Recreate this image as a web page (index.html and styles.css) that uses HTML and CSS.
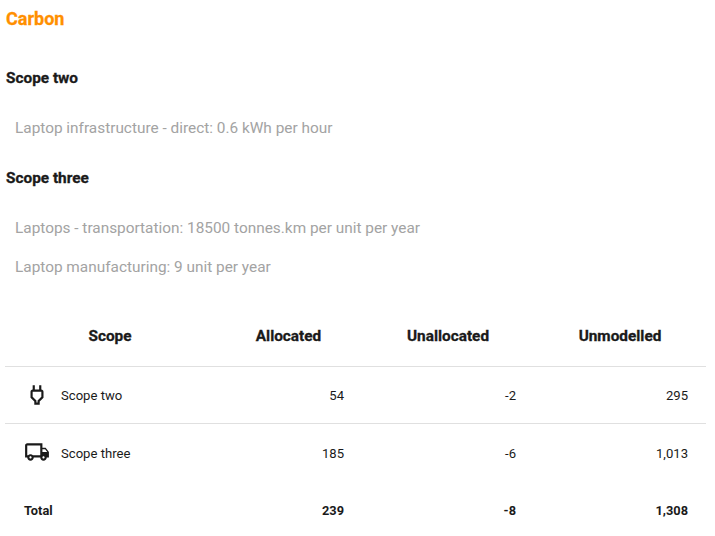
FILE: index.html
```
<!DOCTYPE html>
<html>
<head><meta charset="utf-8"><title>Carbon</title><link rel="stylesheet" href="styles.css"></head>
<body>
<h1 class="title">Carbon</h1>
<h2 class="scope">Scope two</h2>
<p class="item">Laptop infrastructure - direct: 0.6 kWh per hour</p>
<h2 class="scope">Scope three</h2>
<p class="item">Laptops - transportation: 18500 tonnes.km per unit per year</p>
<p class="item">Laptop manufacturing: 9 unit per year</p>
<table class="tbl">
<thead><tr><th class="c1">Scope</th><th class="c2">Allocated</th><th class="c3">Unallocated</th><th class="c3">Unmodelled</th></tr></thead>
<tbody>
<tr class="row"><td class="lab"><span class="cell"><span class="ic"><svg width="26" height="26" viewBox="0 0 24 24"><path fill="#1a1a1a" d="M16 7V3h-2v4h-4V3H8v4H7.990C6.900 6.990 6 7.890 6 8.980v5.510L9.500 18v3h5v-3l3.500-3.520V9c0-1.100-.9-2-2-2zm0 6.670-3.500 3.510V19h-1v-1.820L8 13.650V9h8v4.670z"/></svg></span>Scope two</span></td><td>54</td><td>-2</td><td>295</td></tr>
<tr class="row row2"><td class="lab"><span class="cell"><span class="ic"><svg width="26" height="26" viewBox="0 0 24 24"><path fill="#1a1a1a" d="M20 8h-3V4H3c-1.100 0-2 .9-2 2v11h2c0 1.660 1.340 3 3 3s3-1.340 3-3h6c0 1.660 1.340 3 3 3s3-1.340 3-3h2v-5l-3-4zm-.5 1.500 1.960 2.500H17V9.500h2.500zM6 18c-.55 0-1-.45-1-1s.45-1 1-1 1 .45 1 1-.45 1-1 1zm2.220-3c-.55-.61-1.330-1-2.220-1s-1.670.39-2.220 1H3V6h12v9H8.220zM18 18c-.55 0-1-.45-1-1s.45-1 1-1 1 .45 1 1-.45 1-1 1z"/></svg></span>Scope three</span></td><td>185</td><td>-6</td><td>1,013</td></tr>
<tr class="total"><td class="lab">Total</td><td>239</td><td>-8</td><td>1,308</td></tr>
</tbody>
</table>
</body>
</html>
```
FILE: styles.css
```
html, body { margin: 0; padding: 0; }
body { background: #fff; font-family: Roboto, sans-serif; color: #1a1a1a; padding: 0 9px 0 5px; }
.title { margin: 0; padding: 8px 0 0 1px; font-size: 18px; line-height: 21px; font-weight: 700; color: #ff8f00; -webkit-text-stroke: 0.3px #ff8f00; }
.scope { margin: 0; padding-left: 1px; font-size: 15.360px; line-height: 18px; font-weight: 700; color: #1a1a1a; -webkit-text-stroke: 0.3px #1a1a1a; }
.title + .scope { margin-top: 40px; }
.item { margin: 0; padding-left: 10px; font-size: 15.380px; line-height: 18px; color: #a3a3a3; }
.scope + .item { margin-top: 32px; }
.item + .scope { margin-top: 32px; }
.item + .item { margin-top: 21px; }
.tbl { width: 701px; margin-top: 30px; border-collapse: collapse; table-layout: fixed; font-size: 13.100px; }
th { box-sizing: border-box; height: 60px; padding: 0; font-size: 15.360px; font-weight: 700; text-align: center; -webkit-text-stroke: 0.3px #1a1a1a; }
th.c1 { width: 185px; padding-left: 25px; }
th.c2 { width: 172px; padding-left: 25px; }
th.c3 { width: 172px; }
td { box-sizing: border-box; padding: 2px 18px 0 0; text-align: right; }
.row td { height: 57px; border-top: 1px solid #e0e0e0; }
.row2 td { padding-top: 4px; }
.total td { height: 58px; font-size: 12.800px; font-weight: 700; }
td.lab { text-align: left; padding-left: 19px; }
.cell { display: flex; align-items: center; }
.ic { width: 37px; display: flex; height: 26px; margin-bottom: 2px; }
.row2 .ic { margin-bottom: 4px; }
```
